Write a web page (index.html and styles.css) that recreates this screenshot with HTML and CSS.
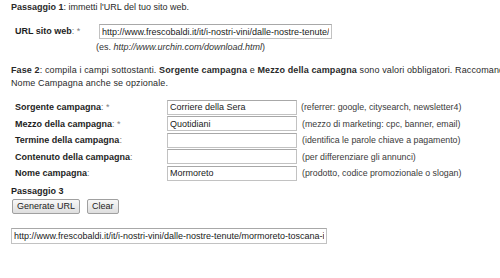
FILE: index.html
```html
<!DOCTYPE html>
<html lang="it">
<head>
<meta charset="utf-8">
<title>Strumento per la creazione di URL</title>
<link rel="stylesheet" href="styles.css">
</head>
<body>
<div class="page">
  <p class="step"><b>Passaggio 1</b>: immetti l'URL del tuo sito web.</p>
  <div class="url-row">
    <label class="lbl" for="u">URL sito web<span class="req">: *</span></label>
    <div class="url-col">
      <input id="u" class="field url-field" type="text" value="http://www.frescobaldi.it/it/i-nostri-vini/dalle-nostre-tenute/mormoreto-toscana-igt">
      <div class="example">(es. <i>http://www.urchin.com/download.html</i>)</div>
    </div>
  </div>
  <p class="step2"><b>Fase 2</b>: compila i campi sottostanti. <b>Sorgente campagna</b> e <b>Mezzo della campagna</b> sono valori obbligatori. Raccomandiamo di compilare il campo<br>Nome Campagna anche se opzionale.</p>
  <div class="form">
    <label class="lbl">Sorgente campagna<span class="req">: *</span></label>
    <input class="field" type="text" value="Corriere della Sera">
    <span class="hint">(referrer: google, citysearch, newsletter4)</span>

    <label class="lbl">Mezzo della campagna<span class="req">: *</span></label>
    <input class="field" type="text" value="Quotidiani">
    <span class="hint pad">(mezzo di marketing: cpc, banner, email)</span>

    <label class="lbl">Termine della campagna<span class="req">:</span></label>
    <input class="field" type="text" value="">
    <span class="hint pad">(identifica le parole chiave a pagamento)</span>

    <label class="lbl">Contenuto della campagna<span class="req">:</span></label>
    <input class="field" type="text" value="">
    <span class="hint pad">(per differenziare gli annunci)</span>

    <label class="lbl">Nome campagna<span class="req">:</span></label>
    <input class="field" type="text" value="Mormoreto">
    <span class="hint pad">(prodotto, codice promozionale o slogan)</span>
  </div>
  <p class="step3">Passaggio 3</p>
  <div class="buttons">
    <button class="btn" type="button">Generate URL</button>
    <button class="btn" type="button">Clear</button>
  </div>
  <input class="field result" type="text" value="http://www.frescobaldi.it/it/i-nostri-vini/dalle-nostre-tenute/mormoreto-toscana-igt/?utm_source=Corriere%2Bdella%2BSera">
</div>
</body>
</html>
```
FILE: styles.css
```css
html, body {
  margin: 0;
  padding: 0;
  background: #fff;
}
body {
  font-family: "Liberation Sans", Arial, sans-serif;
  font-size: 9px;
  color: #2a2a2a;
}
.page {
  padding: 1px 0 0 11px;
}
.step {
  margin: 0;
  line-height: 13px;
}
.url-row {
  display: flex;
  margin-top: 10px;
  margin-left: 4px;
}
.lbl {
  font-weight: bold;
  color: #1e1e1e;
}
.req {
  font-weight: normal;
  color: #808080;
}
.url-row .lbl {
  width: 84px;
  line-height: 15px;
}
.url-col {
  display: flex;
  flex-direction: column;
}
.field {
  box-sizing: border-box;
  height: 14px;
  border: 1px solid #c2c2c2;
  border-top-color: #a8a8a8;
  padding: 0 2px;
  margin: 0;
  font-family: "Liberation Sans", Arial, sans-serif;
  font-size: 9px;
  color: #1a1a1a;
  background: #fff;
  outline: none;
}
.url-field {
  width: 233px;
  height: 15px;
}
.example {
  margin-left: -3px;
  margin-top: 2px;
  line-height: 13px;
  color: #333;
}
.step2 {
  margin: 10px 0 0;
  line-height: 13px;
  white-space: nowrap;
  letter-spacing: 0.12px;
}
.form {
  display: grid;
  grid-template-columns: 152px 130px auto;
  grid-auto-rows: 16.5px;
  align-items: center;
  margin-top: 9px;
  margin-left: 4px;
}
.form .field {
  width: 130px;
  height: 15px;
}
.hint {
  padding-left: 4px;
  color: #3a3a3a;
  font-size: 8.8px;
}
.hint.pad {
  padding-left: 5px;
}
.step3 {
  margin: 3px 0 0;
  font-weight: bold;
  line-height: 13px;
  color: #1e1e1e;
}
.buttons {
  display: flex;
  gap: 7px;
  margin-top: 1px;
  margin-left: 1px;
}
.btn {
  height: 15px;
  padding: 0 4px;
  border: 1px solid #a0a0a0;
  border-radius: 2px;
  background: linear-gradient(#f8f8f8, #dedede);
  font-family: "Liberation Sans", Arial, sans-serif;
  font-size: 9px;
  color: #222;
  line-height: 13px;
}
.result {
  display: block;
  width: 316px;
  height: 16px;
  margin-top: 14px;
}
```
